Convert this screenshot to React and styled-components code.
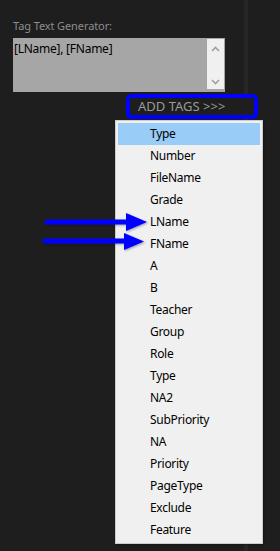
import React from 'react';
import styled, { createGlobalStyle } from 'styled-components';

const GlobalStyle = createGlobalStyle`
  html, body {
    margin: 0;
    padding: 0;
  }
  body {
    background: linear-gradient(
      to right,
      #1e1e1e 244px,
      #262626 244px,
      #262626 248px,
      #1e1e1e 248px
    );
    min-height: 551px;
    font-family: "Noto Sans", "Liberation Sans", sans-serif;
  }
`;

const Page = styled.div`
  position: relative;
  height: 551px;
  box-sizing: border-box;
  padding: 18px 0 0 13px;
`;

const Label = styled.div`
  font-size: 11px;
  line-height: 15px;
  color: #8c8c8c;
  letter-spacing: -0.1px;
  margin-bottom: 5px;
`;

const TextBox = styled.div`
  display: flex;
  width: 212px;
  height: 54px;
  background: #a6a6a6;
`;

const TextValue = styled.div`
  flex: 1;
  padding: 3px 1px;
  font-size: 12px;
  line-height: 15px;
  letter-spacing: -0.25px;
  color: #000;
`;

const Scrollbar = styled.div`
  width: 17px;
  margin: 1px 1px 3px 0;
  background: #f0f0f0;
  display: flex;
  flex-direction: column;
  justify-content: space-between;
  align-items: center;
  padding: 7px 0 4px;
  box-sizing: border-box;
`;

const ButtonRow = styled.div`
  display: flex;
  padding: 2px 0 0 113px;
`;

const AddButton = styled.button`
  width: 132px;
  height: 25px;
  box-sizing: border-box;
  border: 4px solid #0000ff;
  border-radius: 5px;
  background: #1e1e1e;
  color: #9a9a9a;
  font-family: "Noto Sans", "Liberation Sans", sans-serif;
  font-size: 13px;
  text-align: left;
  padding: 0 0 0 8px;
  line-height: 15px;
`;

const Menu = styled.ul`
  position: absolute;
  left: 115px;
  top: 120px;
  width: 148px;
  box-sizing: border-box;
  margin: 0;
  padding: 2px;
  list-style: none;
  background: #f0f0f0;
  border: 1px solid #cccccc;
  box-shadow: 1px 1px 2px rgba(0, 0, 0, 0.3);
`;

const MenuItem = styled.li`
  height: 22px;
  line-height: 22px;
  padding-left: 32px;
  font-size: 12px;
  letter-spacing: -0.3px;
  color: #000;
  background: ${(p) => (p.active ? '#99ccf7' : 'transparent')};
`;

const Overlay = styled.svg`
  position: absolute;
  left: 0;
  top: 0;
  pointer-events: none;
`;

const tags = [
  'Type', 'Number', 'FileName', 'Grade', 'LName', 'FName', 'A', 'B',
  'Teacher', 'Group', 'Role', 'Type', 'NA2', 'SubPriority', 'NA',
  'Priority', 'PageType', 'Exclude', 'Feature',
];

const Chevron = ({ up }) => (
  <svg width="9" height="6" viewBox="0 0 9 6">
    <path
      d={up ? 'M1 5 L4.5 1.5 L8 5' : 'M1 1 L4.5 4.5 L8 1'}
      fill="none"
      stroke="#a0a0a0"
      strokeWidth="1.6"
    />
  </svg>
);

const App = () => {
  return (
    <Page>
      <GlobalStyle />
      <Label>Tag Text Generator:</Label>
      <TextBox>
        <TextValue>[LName], [FName]</TextValue>
        <Scrollbar>
          <Chevron up />
          <Chevron />
        </Scrollbar>
      </TextBox>
      <ButtonRow>
        <AddButton>ADD TAGS &gt;&gt;&gt;</AddButton>
      </ButtonRow>
      <Menu>
        {tags.map((t, i) => (
          <MenuItem key={i} active={i === 0}>{t}</MenuItem>
        ))}
      </Menu>
      <Overlay width="280" height="551">
        <defs>
          <filter id="shadow" x="-10%" y="-50%" width="130%" height="200%">
            <feDropShadow dx="1" dy="1" stdDeviation="0.8" floodColor="#000" floodOpacity="0.35" />
          </filter>
        </defs>
        <g fill="#0000ff" stroke="#0000ff" filter="url(#shadow)">
          <line x1="47" y1="222" x2="128" y2="222" strokeWidth="5" strokeLinecap="round" />
          <polygon points="126,213 147,222 126,231" strokeWidth="0" />
          <line x1="45" y1="241" x2="126" y2="241" strokeWidth="5" strokeLinecap="round" />
          <polygon points="124,233 144,241.5 124,250" strokeWidth="0" />
        </g>
      </Overlay>
    </Page>
  );
};

export default App;
